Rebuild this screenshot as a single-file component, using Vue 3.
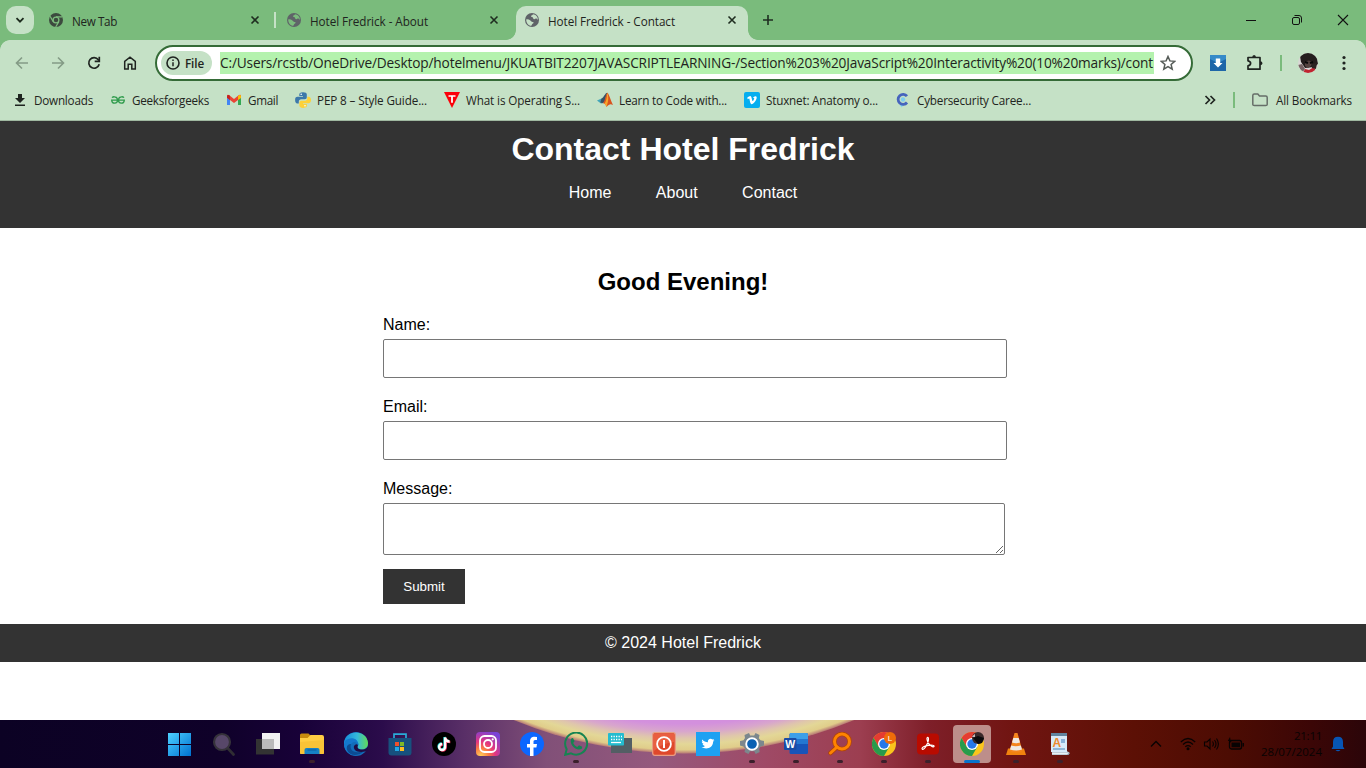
<script setup>
const bookmarks = [
  { icon: 'download', text: 'Downloads', w: 60 },
  { icon: 'gfg', text: 'Geeksforgeeks', w: 78 },
  { icon: 'gmail', text: 'Gmail', w: 31 },
  { icon: 'python', text: 'PEP 8 – Style Guide...', w: 111 },
  { icon: 'tri', text: 'What is Operating S...', w: 115 },
  { icon: 'matlab', text: 'Learn to Code with...', w: 109 },
  { icon: 'vimeo', text: 'Stuxnet: Anatomy o...', w: 113 },
  { icon: 'cyber', text: 'Cybersecurity Caree...', w: 115 },
]
const tabs = [
  { title: 'New Tab', w: 45, icon: 'chrome' },
  { title: 'Hotel Fredrick - About', w: 118, icon: 'globe' },
  { title: 'Hotel Fredrick - Contact', w: 127, icon: 'globe', active: true },
]
const url = 'C:/Users/rcstb/OneDrive/Desktop/hotelmenu/JKUATBIT2207JAVASCRIPTLEARNING-/Section%203%20JavaScript%20Interactivity%20(10%20marks)/cont'
const apps = [
  { n: 'start' }, { n: 'search' }, { n: 'taskview' }, { n: 'files', dot: true }, { n: 'edge' },
  { n: 'store' }, { n: 'tiktok' }, { n: 'insta' }, { n: 'facebook' }, { n: 'whatsapp', dot: true },
  { n: 'keyboard' }, { n: 'power' }, { n: 'twitter' }, { n: 'settings', dot: true }, { n: 'word', dot: true },
  { n: 'find', dot: true }, { n: 'chromeL', dot: true }, { n: 'acrobat', dot: true }, { n: 'chromeA', active: true },
  { n: 'vlc', dot: true }, { n: 'wordpad', dot: true },
]
// Tightens or loosens tracking so a label fills its slot.
const vFit = {
  mounted(el, { value }) {
    el.style.letterSpacing = '0px'
    const width = el.getBoundingClientRect().width
    el.style.letterSpacing = (value - width) / el.textContent.length + 'px'
  },
}
</script>

<template>
  <div class="screen">
    <div class="tabstrip">
      <div class="tabsearch"><svg width="10" height="10" viewBox="0 0 10 10"><path d="M1.5 3.2 5 6.7 8.5 3.2" fill="none" stroke="#1c2a1d" stroke-width="1.8" /></svg></div>
      <div v-for="(t, i) in tabs" :key="t.title" class="tab" :class="{ active: t.active, first: i === 0, second: i === 1 }">
        <svg v-if="t.icon === 'chrome'" class="fav" width="16" height="16" viewBox="0 0 16 16">
          <circle cx="8" cy="8" r="7" fill="#3c4a3e" /><circle cx="8" cy="8" r="2.9" fill="#3c4a3e" stroke="#7cbc7d" stroke-width="1.3" />
          <path d="M8 4.8H14.3M5.2 9.6 2.1 4.2M10.8 9.6 7.7 15" stroke="#7cbc7d" stroke-width="1.2" />
        </svg>
        <svg v-else class="fav" width="16" height="16" viewBox="0 0 16 16">
          <circle cx="8" cy="8" r="7" fill="#5f6368" />
          <path d="M2.2 7.4c1.5-.3 3 .1 4.2 1.1 1 .8 1.2 1.7 2.5 1.4 1-.1.8 1.2 0 1.5-1.1.4-.8 1.6-1.7 2.4C4.4 13.5 2.2 11 2.2 7.4zM9 2.3c-.2 1-1.6.8-2 1.8-.3 1 .8.9 1.6 1.2.8.4.2 1.6 1.4 1.9 1.2.3 1.5-1 2.5-.6.7.3 1 .9 1.4 1.5.2-3.2-2.2-5.6-4.9-5.8z" :fill="t.active ? '#c5e1c6' : '#7abb7c'" />
        </svg>
        <span class="tabtitle"><span v-fit="t.w" class="fit">{{ t.title }}</span></span>
        <svg class="close" width="10" height="10" viewBox="0 0 10 10"><path d="m1.5 1.5 7 7m0-7-7 7" stroke="#1f2d20" stroke-width="1.6" /></svg>
        <template v-if="t.active"><i class="flare left" /><i class="flare right" /></template>
      </div>
      <svg class="plus" width="12" height="12" viewBox="0 0 12 12"><path d="M6 1v10M1 6h10" stroke="#1f2d20" stroke-width="1.6" /></svg>
      <div class="winbtns">
        <svg width="12" height="12" viewBox="0 0 12 12"><path d="M1 6.5h10" stroke="#111" /></svg>
        <svg width="12" height="12" viewBox="0 0 12 12"><rect x="1.5" y="3.5" width="7" height="7" rx="1.5" fill="none" stroke="#111" /><path d="M3.5 1.5H8q2.500 0 2.500 2.500v4.500" fill="none" stroke="#111" /></svg>
        <svg width="12" height="12" viewBox="0 0 12 12"><path d="m1 1 10 10M11 1 1 11" stroke="#111" stroke-width="1.1" /></svg>
      </div>
    </div>

    <div class="chrome">
      <div class="toolbar">
        <div class="cell"><svg width="16" height="16" viewBox="0 0 16 16"><path d="M14 8H3M8 2.500 2.500 8 8 13.500" fill="none" stroke="#849b86" stroke-width="1.6" /></svg></div>
        <div class="cell"><svg width="16" height="16" viewBox="0 0 16 16"><path d="M2 8h11M8 2.500 13.500 8 8 13.500" fill="none" stroke="#849b86" stroke-width="1.6" /></svg></div>
        <div class="cell"><svg width="16" height="16" viewBox="0 0 16 16"><path d="M13.200 9.300A5.300 5.300 0 1 1 12.300 4.700L13 5.600" fill="none" stroke="#1f2420" stroke-width="1.7" /><path d="M13.300 1.800V6.400H8.700" fill="none" stroke="#1f2420" stroke-width="1.7" /></svg></div>
        <div class="cell"><svg width="16" height="16" viewBox="0 0 16 16"><path d="M2.700 14V6.400L8 2.200l5.300 4.200V14H9.800V9.200H6.200V14z" fill="none" stroke="#1f2420" stroke-width="1.5" /></svg></div>
        <div class="omni">
          <div class="chip">
            <svg width="14" height="14" viewBox="0 0 14 14"><circle cx="7" cy="7" r="6" fill="none" stroke="#1f2420" stroke-width="1.6" /><path d="M7 6.200v4M7 3.500v1.400" stroke="#1f2420" stroke-width="1.5" /></svg>
            <span v-fit="19" class="fit">File</span>
          </div>
          <div class="url"><span v-fit="933" class="fit">{{ url }}</span></div>
          <svg class="star" width="16" height="16" viewBox="0 0 16 16"><path d="m8 1.500 1.900 4.400 4.800.4-3.600 3.200 1.100 4.700L8 11.700l-4.200 2.500 1.100-4.700L1.300 6.300l4.800-.4z" fill="none" stroke="#555b57" stroke-width="1.5" /></svg>
        </div>
        <div class="ext">
          <svg width="16" height="16" viewBox="0 0 16 16"><rect width="16" height="16" fill="#1e66a8" /><path d="M0 0h16v4L8 8 0 4z" fill="#3f9ad6" opacity=".7" /><path d="M5.800 3.500h4.400V8h2.300L8 12.500 3.500 8h2.300z" fill="#fff" /></svg>
        </div>
        <div class="ext puzzle">
          <svg width="20" height="20" viewBox="0 0 20 20"><path d="M3 4.500h12v11.700H3v-3.400q2.600-.5 2.600-2.500T3 7.800z" fill="none" stroke="#1f2420" stroke-width="1.700" stroke-linejoin="round" /><path d="M7.200 4.500a1.900 2.500 0 0 1 3.800 0zM15 8.300a2.500 1.900 0 0 1 0 3.800z" fill="#1f2420" /></svg>
        </div>
        <i class="bar toolsep" />
        <svg class="avatar" width="20" height="20" viewBox="0 0 20 20"><defs><clipPath id="av"><circle cx="10" cy="10" r="10" /></clipPath></defs><g clip-path="url(#av)"><path fill="#d9d5d4" d="M0 0h20v20H0z" /><path d="M2 3Q10-4 19 2l1 9-4 3-9 1-4-6z" fill="#241d1d" /><path d="M7 9q4-3 7 0l-1 4-3 2-3-2z" fill="#54423f" /><path d="m7 9 3 1m2 0 3-1" stroke="#090909" stroke-width="2" /><path d="m5 20 2-4 4 1 5-3 3 6z" fill="#c02430" /><path d="M14 11l5-1-1 6-4-1z" fill="#2c2322" /><path d="M0 12l4-1 3 5-3 4z" fill="#776364" /></g></svg>
        <svg class="menu" width="4" height="16" viewBox="0 0 4 16"><circle cx="2" cy="2.500" r="1.600" /><circle cx="2" cy="8" r="1.600" /><circle cx="2" cy="13.500" r="1.600" /></svg>
      </div>

      <div class="bookmarks">
        <div v-for="b in bookmarks" :key="b.icon" class="bm">
          <svg width="16" height="16" viewBox="0 0 16 16">
            <path v-if="b.icon === 'download'" d="M6 2h4v4h3l-5 5-5-5h3zM3 12.500h10V14H3z" fill="#1f2420" />
            <g v-else-if="b.icon === 'gfg'" fill="none" stroke="#2f9b4c" stroke-width="1.300"><path d="M2 5.600Q3 4.600 4.600 4.800A2.900 3.200 0 1 1 1.700 8.200H14.300A2.900 3.200 0 1 1 11.400 4.800Q13 4.600 14 5.600" /></g>
            <g v-else-if="b.icon === 'gmail'"><path d="M1 4v9h3V6z" fill="#4285f4" /><path d="M15 4v9h-3V6z" fill="#34a853" /><path d="M1 4q0-1.800 2-1l5 4 5-4q2-.8 2 1v1.800L8 11 1 5.800z" fill="#ea4335" /><path d="M12 4.200 13.300 3q1.700-.4 1.700 1.200V6l-3 2z" fill="#fbbc04" /><path d="M1 4.200Q1.300 2.500 3 3l1 .9V8L1 5.800z" fill="#c5221f" /></g>
            <g v-else-if="b.icon === 'python'"><path d="M8 .2c-3 0-3.700 1-3.700 2.300V4H8v.8H2.500C.8 4.800.1 6 .1 8s.8 3.500 2.200 3.500h1.500V9.600c0-1.400 1.100-2.300 2.400-2.300h3.600c1.200 0 2-.8 2-2V2.500C11.800 1 10.500.2 8 .2z" fill="#3c78aa" /><path d="M8.200 15.900c3 0 3.700-1 3.700-2.300V12H8.200v-.8h5.400c1.600 0 2.400-1.200 2.400-3.200s-.9-3.300-2.200-3.300h-1.500v1.800c0 1.400-1 2.200-2.200 2.200H6.500c-1.200 0-2.100.9-2.100 2v2.900c0 1.500 1.400 2.300 3.800 2.300z" fill="#fdd139" /><circle cx="6.200" cy="2.300" r=".8" fill="#fff" /><circle cx="10" cy="13.800" r=".8" fill="#fff" /></g>
            <g v-else-if="b.icon === 'tri'"><path d="M0 0h16L8 16z" fill="#fb0009" /><path d="M4.500 3.200h7v1.500H8.900v6.100H7.100V4.700H4.500z" fill="#fff" /></g>
            <g v-else-if="b.icon === 'matlab'"><path d="m0 8.500 4.500-2 2.700 2.500-3 2.800z" fill="#42a5b9" /><path d="M4.500 6.500C7 5.500 8 1 10.300.8L7.500 10l-1.700 1.300-2.500-.8z" fill="#375267" /><path d="M10.300.8C11.700 1 14 9 16 13c-2.500-1.600-4-1-6.500 2C8.700 12.500 7.700 11.200 5.800 11.300 8 10 8.400 2.800 10.300.8z" fill="#d9531e" /><path d="M10.300.8c-.4 4-1 9-2.800 10.700l2 3.300C12 8 11.500 4 10.300.8z" fill="#f7a62a" /></g>
            <g v-else-if="b.icon === 'vimeo'"><rect width="16" height="16" rx="2" fill="#05aeef" /><path d="M3.200 5.800C4.500 4.700 5.500 4 6.200 4c1.700 0 1.600 4.800 2.500 5 .5.100 1.700-2 1.500-2.700-.2-.6-.9-.4-1.200-.2.500-1.800 3.500-3 3.700-.7.100 2.400-3.200 6.800-5.100 6.800-1.700 0-1.800-5.300-2.500-5.700-.2-.1-.8.300-1.300.7z" fill="#fff" /></g>
            <g v-else><path d="M4.500 13q1.500.5 2 2.500Q8.500 12.700 10.500 12.500z" fill="#83d3f1" /><circle cx="8" cy="7.500" r="2.200" fill="#7fcdf0" /><path d="M12 4.200A5 5 0 1 0 12 10.500" fill="none" stroke="#4664bd" stroke-width="2.800" /></g>
          </svg>
          <span class="bmtext" :style="{ width: b.w + 'px' }"><span v-fit="b.w - 1" class="fit">{{ b.text }}</span></span>
        </div>
        <div class="bmright">
          <svg width="12" height="12" viewBox="0 0 12 12"><path d="m1.500 2 4 4-4 4M6.500 2l4 4-4 4" fill="none" stroke="#1f2420" stroke-width="1.700" /></svg>
          <i class="bar" />
          <svg class="folder" width="16" height="14" viewBox="0 0 16 14"><path d="M.8 11.500v-9Q.8 1 2.300 1h3.500l1.700 2h6.200q1.500 0 1.500 1.500v7q0 1-1.500 1H2.300q-1.500 0-1.500-1z" fill="none" stroke="#666e68" stroke-width="1.500" /></svg>
          <span v-fit="76" class="fit">All Bookmarks</span>
        </div>
      </div>
    </div>

    <div class="page">
      <header>
        <h1>Contact Hotel Fredrick</h1>
        <nav><a>Home</a><a>About</a><a>Contact</a></nav>
      </header>
      <main>
        <h2>Good Evening!</h2>
        <form @submit.prevent>
          <label>Name:</label>
          <input type="text" />
          <label>Email:</label>
          <input type="email" />
          <label>Message:</label>
          <textarea></textarea>
          <button>Submit</button>
        </form>
      </main>
      <footer>© 2024 Hotel Fredrick</footer>
    </div>

    <div class="taskbar">
      <svg class="bloom" width="1366" height="48" viewBox="0 0 1366 48">
        <defs>
          <linearGradient id="bg"><stop offset="0" stop-color="#0c0224" /><stop offset=".16" stop-color="#0f0129" /><stop offset=".22" stop-color="#180138" /><stop offset=".28" stop-color="#2b0c4b" /><stop offset=".34" stop-color="#592f67" /><stop offset=".4" stop-color="#815078" /><stop offset=".48" stop-color="#95597d" /><stop offset=".56" stop-color="#9f4a66" /><stop offset=".63" stop-color="#9c3e50" /><stop offset=".68" stop-color="#7e1f29" /><stop offset=".74" stop-color="#711512" /><stop offset=".83" stop-color="#5c1005" /><stop offset=".9" stop-color="#4c0c03" /><stop offset=".96" stop-color="#3b0606" /><stop offset="1" stop-color="#2b0509" /></linearGradient>
          <radialGradient id="pool" gradientUnits="userSpaceOnUse" cx="684" cy="-416" r="449"><stop offset=".935" stop-color="#d390dd" /><stop offset=".952" stop-color="#d8a6cc" /><stop offset=".967" stop-color="#dfc6ac" /><stop offset=".98" stop-color="#e3d797" /><stop offset=".993" stop-color="#e0cd8a" /><stop offset="1" stop-color="#bd8377" /></radialGradient>
        </defs>
        <rect width="1366" height="48" fill="url(#bg)" /><circle cx="684" cy="-416" r="449.500" fill="url(#pool)" />
      </svg>
      <div class="apps">
        <div v-for="a in apps" :key="a.n" class="app" :class="{ on: a.active }">
          <svg width="24" height="24" viewBox="0 0 24 24">
            <template v-if="a.n === 'start'"><defs><linearGradient id="win" gradientUnits="userSpaceOnUse" x1="1" y1="1" x2="23" y2="23"><stop stop-color="#4ccfff" /><stop offset="1" stop-color="#0073d2" /></linearGradient></defs><path d="M0 1h11v11H0zM12 1h11v11H12zM0 13h11v11H0zM12 13h11v11H12z" fill="url(#win)" /></template>
            <template v-else-if="a.n === 'search'"><path d="m15.500 16 6 6.500" stroke="#302e33" stroke-width="2.700" stroke-linecap="round" /><circle cx="10" cy="10" r="8" fill="#574769" stroke="#35323a" stroke-width="2.200" /></template>
            <template v-else-if="a.n === 'taskview'"><path d="M6 1h18v16H6z" fill="#f1f1f1" /><path d="M0 7h18v15.500H0z" fill="#333" /><path d="M6 7h12v10H6z" fill="#bababa" /></template>
            <template v-else-if="a.n === 'files'"><path d="M0 3q0-1.500 1.500-1.500h7L11 4v5H0z" fill="#c88a0d" /><path d="M0 6h7.500l3-3H22q2 0 2 2v16q0 1-1.500 1h-21Q0 22 0 21z" fill="#ffcd43" /><path d="M0 10 24 8v13q0 1-1.500 1h-21Q0 22 0 21z" fill="#f9c337" /><path d="M4.500 22v-4q0-2 2-2h11q2 0 2 2v4z" fill="#1681c5" /><path d="M7.500 18h9" stroke="#0d64a5" stroke-width="1.200" /></template>
            <template v-else-if="a.n === 'edge'"><defs><linearGradient id="ed"><stop stop-color="#168cda" /><stop offset=".55" stop-color="#34b8db" /><stop offset="1" stop-color="#62d956" /></linearGradient></defs><circle cx="12" cy="12" r="12" fill="#126dba" /><path d="M0 11C1-3 23-3 24 11c0 6-5 7-8 6.500-3-.5-3.200-2-2-3.500 1.700-3-1-5-4-5C5 8 1 9 0 13z" fill="url(#ed)" /><path d="M1 9c5-5 14-3 13 4-1-4-6-4-7-.5C5 18 10 22 18 20c-5 5-15 5-18-6z" fill="#1478cd" /><path d="M7 12c-2 7 4 10 13 7-5 5-14 6-17-1-1-4 1-6 4-6z" fill="#0c4c93" /><path d="M14 13c-1 2-.5 4 3 4.500 3.500 0 5-.5 7-3V18l-3 1.500C13 21 9 18 10 14q2-3 4-1z" fill="#1f0c43" /></template>
            <template v-else-if="a.n === 'store'"><path d="M6 6V2.200h12V6" fill="none" stroke="#29acd9" stroke-width="1.700" /><path d="M.5 6h23v14.500q0 3-3 3h-17q-3 0-3-3z" fill="#17517e" /><path d="M7 10h4v4H7z" fill="#ee512c" /><path d="M12 10h4v4h-4z" fill="#7fba27" /><path d="M7 15h4v4H7z" fill="#20a9e7" /><path d="M12 15h4v4h-4z" fill="#ffbe21" /></template>
            <template v-else-if="a.n === 'tiktok'"><circle cx="12" cy="12" r="12" /><g fill="none" stroke-width="2.300"><path d="M12.500 5v9.500a3 3 0 1 1-3-3M12.500 5q.5 4 4.500 4" stroke="#29e5df" /><path d="M13.800 6v9.500a3 3 0 1 1-3-3M13.800 6q.5 4 4.500 4" stroke="#f33159" /><path d="M13.100 5.500V15a3 3 0 1 1-3-3M13.100 5.500q.5 4 4.500 4" stroke="#fff" /></g></template>
            <template v-else-if="a.n === 'insta'"><defs><radialGradient id="ig" cx=".2" cy="1" r="1.100"><stop stop-color="#ffd05a" /><stop offset=".3" stop-color="#fa7c43" /><stop offset=".55" stop-color="#e43580" /><stop offset="1" stop-color="#7843d8" /></radialGradient></defs><rect width="24" height="24" rx="4" fill="url(#ig)" /><g fill="none" stroke="#fff" stroke-width="1.800"><rect x="4" y="4" width="16" height="16" rx="4.500" /><circle cx="12" cy="12" r="4" /></g><circle cx="16.700" cy="7.300" r="1.100" fill="#fff" /></template>
            <template v-else-if="a.n === 'facebook'"><circle cx="12" cy="12" r="12" fill="#0b67ff" /><path d="M10 24v-8.500H7V12h3V9.500C10 6 12 4.700 14.500 4.700l2.500.2V8h-1.700c-1.500 0-1.800.8-1.800 1.900V12H17l-.6 3.500h-2.900V24z" fill="#fff" /></template>
            <template v-else-if="a.n === 'whatsapp'"><path d="m1.200 22.800 1.500-5.600A11 11 0 1 1 7 21.300z" fill="none" stroke="#168452" stroke-width="2" /><path d="M7.500 6.200 9 6l1.500 3.200-1.300 1.700c1 2 2.200 3 4 4l1.800-1.600 3.200 1.500-.2 1.700C13 20.500 4 12 7.500 6.200z" fill="#168452" /></template>
            <template v-else-if="a.n === 'keyboard'"><path d="M3 6h21v15H3z" fill="#535e64" /><rect width="16" height="12.500" y="1" rx="1" fill="#24bccf" /><path d="M3 4.500h11M3 7.500h11" stroke="#fff" stroke-width="1.300" stroke-dasharray="1.300 1.200" /><path d="M3 10.500h10" stroke="#fff" stroke-width="1.300" /></template>
            <template v-else-if="a.n === 'power'"><rect x=".7" y=".7" width="22.600" height="22.600" rx="2" fill="#df482b" stroke="#e99d82" stroke-width="1.300" /><path d="M2 2h20v8Q10 11 2 19z" fill="#ed6a4b" opacity=".7" /><circle cx="12" cy="12" r="6.900" fill="none" stroke="#fff" stroke-width="1.800" /><path d="M12 8v8" stroke="#fff" stroke-width="2" /></template>
            <template v-else-if="a.n === 'twitter'"><path d="M0 0h24v24H0z" fill="#1da1f2" /><path d="M6.300 7.500c1.400 1.700 3.300 2.700 5.600 2.800-.5-3 2.700-4.400 4.500-2.700l1.600-.6-.9 1.500 1.300-.3-1.300 1.500c0 6-6.500 8.500-11.600 5.400 1.500.1 2.600-.3 3.500-1.200-1.300-.1-2-.7-2.400-1.800l1.100-.1c-1.200-.5-1.900-1.300-1.900-2.500l1.100.3c-1-.8-1.200-1.700-.6-2.300z" fill="#fff" /></template>
            <template v-else-if="a.n === 'settings'"><path d="m9 1 1.200 2.500h4L15.500 1l4 2-.7 3.200 1.700 2 3.500.8v4.500l-3.300 1-1.600 2.200.6 3.300-4 2-1.500-2.700h-4L8.500 22l-4-2 .7-3.300L3.400 14.500 0 13.500V9l3.500-.8L5 6 4.500 3z" fill="#7c878d" /><circle cx="12" cy="12" r="5.800" fill="#0961b3" stroke="#fff" stroke-width="1.900" /></template>
            <template v-else-if="a.n === 'word'"><rect x="5.500" y="1" width="18.500" height="21" rx="1.500" fill="#1854b9" /><path d="M6 1h16.500q1.500 0 1.500 1.500V7H5.500z" fill="#3c9fe8" /><path d="M5.500 7H24v5H5.500z" fill="#2477d2" /><rect y="6" width="12.500" height="12" rx="1" fill="#194ba5" /><text x="1.200" y="15.500" class="wmark">W</text></template>
            <template v-else-if="a.n === 'find'"><path d="M9 15 2.500 21" stroke="#ad430b" stroke-width="4.500" stroke-linecap="round" /><circle cx="14" cy="9.500" r="7.500" fill="none" stroke="#b34707" stroke-width="4.500" /><circle cx="14" cy="9.500" r="7.500" fill="none" stroke="#ff8400" stroke-width="3" /><path d="M9 15 2.500 21" stroke="#ff8400" stroke-width="3" stroke-linecap="round" /></template>
            <template v-else-if="a.n === 'chromeL' || a.n === 'chromeA'"><circle cx="12" cy="12" r="12" fill="#fac51c" /><path d="M1.600 6A12 12 0 0 1 22.400 6H12L6.800 15z" fill="#e53c32" /><path d="M1.600 6A12 12 0 0 0 12 24l5.200-9H6.800z" fill="#279b4c" /><circle cx="12" cy="12" r="6" fill="#fff" /><circle cx="12" cy="12" r="4.700" fill="#2678e8" /><g v-if="a.n === 'chromeL'"><circle cx="18" cy="6" r="6" fill="#ef6c09" /><text x="15.800" y="9" class="badge">L</text></g><g v-else><circle cx="18" cy="6" r="6" fill="#3a292a" /><path d="m13 6 5-2 6 2-2 5-4 1z" fill="#0b0a0c" /><path d="M12 5q1-2 3-3v3z" fill="#c7b9ba" /></g></template>
            <template v-else-if="a.n === 'acrobat'"><rect x="1" y="1.500" width="22" height="21" rx="4" fill="#b90b00" /><path d="M11.300 5.500c2.300-.5.800 5.500-1 8.200-1.500 2.500-3 4-4 3.500-1.500-1.500 3-3.500 6-3.900 3.500-.5 6.300 0 5.700 1.200-.7 1.300-3.900-.9-5.300-2.900-1.400-2-2.300-5.800-1.400-6.100z" fill="none" stroke="#fff" stroke-width="1.200" /></template>
            <template v-else-if="a.n === 'vlc'"><path d="M4 16.500h16L22 23H2z" fill="#f1830e" /><path d="M10.500 1h3l5 18q-6.500 3-13 0z" fill="#f5851d" /><path d="m9.300 6-1.300 4.500q4 1.500 8 0L14.700 6zM7.200 13.500 6 17.500q6 2 12 0l-1.200-4q-5 1.500-9.600 0z" fill="#eee9e2" /></template>
            <template v-else><path d="M3 2h16v17l3 2-1.500 2H4z" fill="#98aabb" /><path d="M3 2h16v18H3z" fill="#d7e9f8" /><path d="M3 1h16v3H3z" fill="#61849f" /><text x="4.500" y="14.800" class="amark">A</text><path d="M13 8h4M13 10h4" stroke="#3b78b8" /><path d="M5 17h12" stroke="#6293c0" stroke-width="1.200" /><path d="M4 20.500h17l-2 2H4z" fill="#e9f0f4" /></template>
          </svg>
          <i v-if="a.dot" class="dot" /><i v-if="a.active" class="dot wide" />
        </div>
      </div>
      <div class="tray">
        <svg class="up" width="12" height="8" viewBox="0 0 12 8"><path d="m1 6.500 5-5 5 5" fill="none" stroke="#080303" stroke-width="1.300" /></svg>
        <svg class="wifi" width="16" height="14" viewBox="0 0 16 14"><path d="M.8 5Q8-2 15.200 5M3 7.500q5-5 10 0M5.300 9.800q2.700-2.500 5.400 0" fill="none" stroke="#080303" stroke-width="1.200" /><circle cx="8" cy="11.800" r="1.500" fill="#080303" /></svg>
        <svg class="speaker" width="16" height="14" viewBox="0 0 16 14"><path d="M1.500 5H4l3-3v10L4 9H1.500zM9.500 4.500q1.800 2.500 0 5M11.500 3q3 4 0 8M13.500 1.500q3.800 5.500 0 11" fill="none" stroke="#080303" stroke-width="1.100" /></svg>
        <svg class="battery" width="18" height="14" viewBox="0 0 18 14"><rect x="2.500" y="3.500" width="12" height="8.500" rx="2" fill="none" stroke="#080303" stroke-width="1.300" /><path d="M4.500 5.500h8.500v4.800H4.500zM15.500 6H17v3.500h-1.500zM3 0 .8 4h2L2 7l3.500-4H3.600z" fill="#080303" /></svg>
        <div class="clock"><span v-fit="28" class="fit">21:11</span><span v-fit="61" class="fit">28/07/2024</span></div>
        <svg class="bell" width="14" height="16" viewBox="0 0 14 16"><path d="M2 10.500V6Q2 .8 7 .8T12 6v4.500l1.500 2.500H.5zM4.500 14h5Q7 16.600 4.500 14z" fill="#0755b4" /></svg>
      </div>
    </div>
  </div>
</template>

<style>
body { margin: 0; overflow: hidden; }
</style>
<style scoped>
* { box-sizing: border-box; }
svg { display: block; flex: none; }
.screen { width: 1366px; height: 768px; overflow: hidden; display: flex; flex-direction: column; background: #fff; font: 11.700px/16px "Open Sans", "Noto Sans", sans-serif; color: #1f2420; }
.fit { display: inline-block; white-space: nowrap; }
.tabstrip { height: 40px; flex: none; background: #7abb7c; display: flex; align-items: center; padding-left: 6px; }
.tabsearch { width: 28px; height: 28px; border-radius: 10px; background: #c5e1c6; display: flex; align-items: center; justify-content: center; }
.tab { position: relative; width: 232px; height: 34px; margin-top: 6px; padding: 0 11px 6px 8px; display: flex; align-items: center; }
.tab.first { width: 236px; margin-left: 6px; padding-right: 16px; }
.tab.first::after { content: ""; position: absolute; right: 0; top: 6px; width: 2px; height: 16px; background: #c5e1c6; }
.tab.second { width: 240px; padding-left: 10px; padding-right: 17px; }
.tab.active { background: #c5e1c6; border-radius: 10px 10px 0 0; }
.flare { position: absolute; bottom: 0; width: 10px; height: 10px; }
.flare.left { left: -10px; background: radial-gradient(circle at 0 0, #7abb7c 9.500px, #c5e1c6 10.200px); }
.flare.right { right: -10px; background: radial-gradient(circle at 100% 0, #7abb7c 9.500px, #c5e1c6 10.200px); }
.tabtitle { flex: 1; margin-left: 8px; padding-top: 2px; }
.plus { margin-left: 14px; }
.winbtns { margin-left: auto; margin-right: 17px; display: flex; gap: 34px; }
.chrome { height: 81px; flex: none; background: linear-gradient(#c5e1c6, #c5e1c6) no-repeat 10px 0 / 1346px 10px, radial-gradient(circle at 10px 10px, #c5e1c6 9.500px, #7abb7c 10.200px) no-repeat 0 0 / 10px 10px, radial-gradient(circle at 0 10px, #c5e1c6 9.500px, #7abb7c 10.200px) no-repeat 100% 0 / 10px 10px, linear-gradient(#c5e1c6, #c5e1c6) no-repeat 0 10px / 100% 71px; border-bottom: 1px solid #9fb8a0; }
.toolbar { height: 46px; padding-left: 4px; display: flex; align-items: center; }
.cell { width: 36px; display: flex; justify-content: center; }
.omni { width: 1038px; height: 36px; margin-left: 7px; border: 2px solid #356b37; border-radius: 18px; background: #fff; display: flex; align-items: center; padding-left: 4px; }
.chip { width: 51px; height: 24px; border-radius: 12px; background: #c5e1c6; display: flex; align-items: center; padding-left: 5px; gap: 5px; font-weight: 600; }
.url { margin-left: 8px; width: 934px; height: 22px; overflow: hidden; background: #b4f2ae; font-size: 13.700px; line-height: 22px; white-space: nowrap; }
.star { margin-left: 6px; }
.ext { width: 36px; margin-left: 7px; display: flex; justify-content: center; }
.ext.puzzle { margin-left: 1px; }
.bar { width: 2px; height: 16px; background: #7abb7c; }
.toolsep { margin-left: 7px; }
.avatar { margin-left: 16px; }
.menu { margin-left: 24px; fill: #1f2420; }
.bookmarks { height: 28px; padding-left: 12px; display: flex; align-items: center; gap: 16px; }
.bm { display: flex; align-items: center; gap: 6px; }
.bmtext { display: block; white-space: nowrap; }
.bmright { margin-left: auto; margin-right: 14px; display: flex; align-items: center; }
.bmright .bar { margin: 0 17px 0 17px; }
.bmright .folder { margin-right: 8px; }
.page { height: 599px; flex: none; background: #fff; font: 16px/18px "Liberation Sans", Arial, sans-serif; color: #000; }
header { height: 107px; background: #333; color: #fff; padding-top: 10px; text-align: center; }
h1 { margin: 0; font-size: 32px; line-height: 37px; }
nav { margin-top: 16px; display: flex; justify-content: center; gap: 44.450px; line-height: 18px; }
main { height: 396px; padding: 40px 0 0 383px; }
h2 { margin: 0 383px 21px 0; font-size: 24px; line-height: 27px; text-align: center; }
form { display: flex; flex-direction: column; align-items: flex-start; }
label { display: block; height: 18px; margin-bottom: 5px; }
input { width: 624px; height: 39px; margin: 0 0 20px; border: 1px solid #767676; border-radius: 2px; background: #fff; }
textarea { width: 622px; height: 52px; margin: 0 0 14px; border: 1px solid #767676; border-radius: 2px; background: #fff; display: block; resize: both; }
button { width: 82px; height: 35px; padding: 0; border: 0; background: #333; color: #fff; font: 13.333px "Liberation Sans", Arial, sans-serif; }
footer { height: 38px; background: #333; color: #fff; text-align: center; line-height: 18px; padding-top: 10px; }
.taskbar { position: relative; height: 48px; flex: none; display: flex; }
.bloom { position: absolute; inset: 0; }
.apps { position: relative; margin-left: 158px; display: flex; align-items: center; }
.app { position: relative; width: 38px; height: 38px; margin: 0 3px; border-radius: 4px; display: flex; align-items: center; justify-content: center; }
.app.on { background: #bd8e8a; }
.dot { position: absolute; left: 16px; bottom: 0; width: 6px; height: 3px; border-radius: 2px; background: #3b202b; }
.dot.wide { left: 11px; width: 16px; background: #0874cc; }
.badge { font: 8px "Liberation Sans", Arial, sans-serif; fill: #fff; }
.wmark { font: bold 10.500px "Liberation Sans", Arial, sans-serif; fill: #fff; }
.amark { font: bold 12px "Liberation Sans", Arial, sans-serif; fill: #ee8a2d; }
.tray { position: relative; margin-left: auto; margin-right: 21px; display: flex; align-items: center; color: #080303; }
.wifi { margin-left: 18px; }
.speaker { margin-left: 7px; }
.battery { margin-left: 8px; }
.clock { width: 77px; display: flex; flex-direction: column; align-items: flex-end; line-height: 16px; font-size: 11.500px; }
.bell { margin-left: 9px; }
</style>
